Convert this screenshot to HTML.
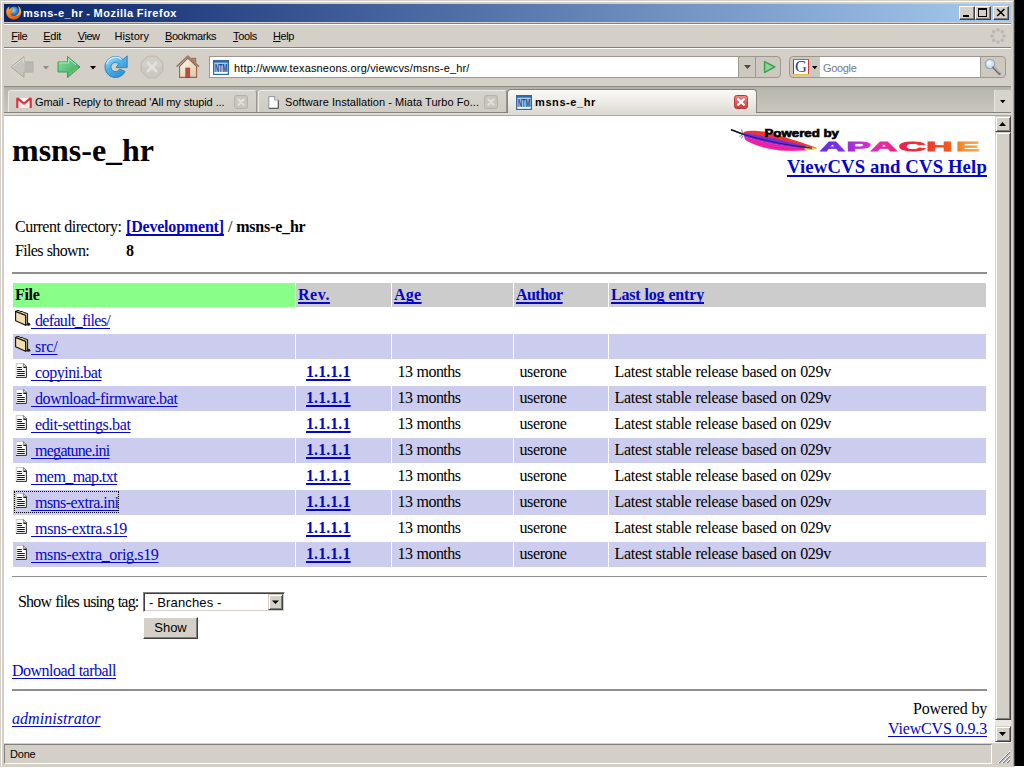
<!DOCTYPE html>
<html><head><meta charset="utf-8"><title>msns-e_hr - Mozilla Firefox</title>
<style>
html,body{margin:0;padding:0;}
body{width:1024px;height:768px;overflow:hidden;background:#fff;position:relative;font-family:"Liberation Sans","DejaVu Sans",sans-serif;font-size:11px;color:#000;}
.abs{position:absolute;}
svg{display:block;overflow:visible;}
#win{position:absolute;left:0;top:0;width:1015px;height:767px;background:#d4d0c8;}
#black{position:absolute;left:1015px;top:0;width:9px;height:766px;background:#000;}
#titlebar{position:absolute;left:4px;top:4px;width:1007px;height:18px;background:linear-gradient(to right,#0a246a 0%,#a6caf0 100%);}
#title{position:absolute;left:20px;top:2px;color:#fff;font-weight:bold;font-size:11px;line-height:14px;white-space:nowrap;letter-spacing:0.45px;}
.ui{font-family:"Liberation Sans","DejaVu Sans",sans-serif;font-size:11px;white-space:nowrap;line-height:14px;position:absolute;}
.hl{position:absolute;height:1px;}
.vl{position:absolute;width:1px;}
.cbtn{position:absolute;top:6px;width:16px;height:14px;background:#d4d0c8;box-sizing:border-box;border:1px solid;border-color:#fff #404040 #404040 #fff;box-shadow:inset -1px -1px 0 #808080;}
#page{position:absolute;left:4px;top:116px;width:991px;height:626px;background:#fff;overflow:hidden;font-family:"Liberation Serif","DejaVu Serif",serif;font-size:16px;color:#000;}
#page a{color:#0606c8;text-decoration:underline;text-decoration-skip-ink:none;text-underline-offset:2px;text-decoration-thickness:1px;}
#page a b{text-decoration:underline;text-decoration-thickness:2px;text-underline-offset:1.5px;}
#page .t{position:absolute;white-space:nowrap;line-height:20px;height:20px;}
#page .bg{position:absolute;}
#page .hr{position:absolute;left:8px;width:975px;}
</style></head>
<body>
<div id="win"></div><div id="black"></div>
<div class="hl" style="left:1px;top:1px;width:1012px;background:#fff"></div>
<div class="vl" style="left:1px;top:1px;height:765px;background:#fff"></div>
<div class="vl" style="left:1013px;top:1px;height:765px;background:#aaa7a0"></div>
<div class="vl" style="left:1014px;top:0px;height:766px;background:#3a3a3a"></div>
<div id="titlebar"></div>
<svg class="abs" style="left:5px;top:5px" width="17" height="15" viewBox="0 0 17 15">
<defs><radialGradient id="ffg" cx="0.45" cy="0.35" r="0.6"><stop offset="0" stop-color="#8fd0ff"/><stop offset="0.6" stop-color="#2a78c8"/><stop offset="1" stop-color="#143c8c"/></radialGradient>
<linearGradient id="ffo" x1="0" y1="0" x2="1" y2="1"><stop offset="0" stop-color="#ffb020"/><stop offset="0.5" stop-color="#f07818"/><stop offset="1" stop-color="#d84a10"/></linearGradient></defs>
<circle cx="9" cy="7" r="5.6" fill="url(#ffg)"/>
<path d="M1.2 5.5 C0.6 9.5 3.2 14.2 8.6 14.4 C13.6 14.5 16.6 10.6 16.2 6.4 C15.9 3.6 14.6 1.8 12.8 1 C14.2 2.8 14.6 5 14 7 C13.2 10 10.6 11.4 8.2 11 C6.2 10.6 5.4 9.4 5.6 8.2 C6.6 8.8 7.8 8.4 8.4 7.6 C7 7.8 6 7 6.2 5.6 C6.4 4.4 7.4 4 8 3.2 C6.4 3 5 3.6 4.2 4.6 C4 3.4 4.2 2.4 4.8 1.4 C3 2 1.6 3.4 1.2 5.5 Z" fill="url(#ffo)"/>
<path d="M12.8 1 C14.2 2.8 14.6 5 14 7 C13.4 9.4 11.6 10.8 9.6 11.1 C12.8 11.6 15.6 9.6 16.2 6.4 C15.9 3.6 14.6 1.8 12.8 1Z" fill="#f8c830" opacity="0.75"/>
</svg>
<div class="ui" style="left:23px;top:6px;letter-spacing:0.508px;word-spacing:-0.508px;font-weight:bold;color:#fff;">msns-e_hr - Mozilla Firefox</div>
<div class="cbtn" style="left:959px"><svg width="14" height="12"><rect x="3" y="8" width="6" height="2" fill="#000"/></svg></div>
<div class="cbtn" style="left:975px"><svg width="14" height="12"><rect x="2.5" y="1.5" width="8" height="8" fill="none" stroke="#000"/><rect x="2" y="1" width="9" height="2" fill="#000"/></svg></div>
<div class="cbtn" style="left:993px"><svg width="14" height="12"><path d="M3.2 2L10.4 9M10.4 2L3.2 9" stroke="#000" stroke-width="1.5"/></svg></div>
<div class="hl" style="left:4px;top:23px;width:1007px;background:#808080"></div>
<div class="hl" style="left:4px;top:24px;width:1007px;background:#fff"></div>
<div class="ui" style="left:11.3px;top:29px;letter-spacing:-0.463px;word-spacing:0.463px;"><u>F</u>ile</div>
<div class="ui" style="left:43.3px;top:29px;letter-spacing:-0.317px;word-spacing:0.317px;"><u>E</u>dit</div>
<div class="ui" style="left:77.8px;top:29px;letter-spacing:-0.489px;word-spacing:0.489px;"><u>V</u>iew</div>
<div class="ui" style="left:114.6px;top:29px;letter-spacing:0.024px;word-spacing:-0.024px;">Hi<u>s</u>tory</div>
<div class="ui" style="left:165px;top:29px;letter-spacing:-0.448px;word-spacing:0.448px;"><u>B</u>ookmarks</div>
<div class="ui" style="left:233px;top:29px;letter-spacing:-0.338px;word-spacing:0.338px;"><u>T</u>ools</div>
<div class="ui" style="left:273px;top:29px;letter-spacing:-0.41px;word-spacing:0.41px;"><u>H</u>elp</div>
<svg class="abs" style="left:990px;top:28px" width="16" height="16" viewBox="0 0 16 16"><circle cx="14.00" cy="8.00" r="1.75" fill="#b9b6af"/><circle cx="12.24" cy="12.24" r="1.75" fill="#b9b6af"/><circle cx="8.00" cy="14.00" r="1.75" fill="#b9b6af"/><circle cx="3.76" cy="12.24" r="1.75" fill="#b9b6af"/><circle cx="2.00" cy="8.00" r="1.75" fill="#b9b6af"/><circle cx="3.76" cy="3.76" r="1.75" fill="#b9b6af"/><circle cx="8.00" cy="2.00" r="1.75" fill="#b9b6af"/><circle cx="12.24" cy="3.76" r="1.75" fill="#b9b6af"/></svg>
<div class="hl" style="left:4px;top:47px;width:1007px;background:#808080"></div>
<div class="hl" style="left:4px;top:48px;width:1007px;background:#fff"></div>
<svg class="abs" style="left:8px;top:54px" width="28" height="26" viewBox="0 0 28 26">
<circle cx="13.5" cy="13" r="12.5" fill="#d8d5ce" opacity="0.55"/>
<path d="M3 13 L16 2.5 V8 H25 V18 H16 V23.5 Z" fill="#c6c3bc" stroke="#aaa7a0" stroke-width="1" stroke-linejoin="round"/>
<path d="M16.5 8.8 H24.2 V17.2 H16.5 Z" fill="#bab7b0"/>
<path d="M4.6 13 L15.4 4.4 V8.8 H17" fill="none" stroke="#dddad4" stroke-width="1"/>
</svg>
<svg class="abs" style="left:43px;top:66px" width="6" height="3.5" viewBox="0 0 6 3.5"><path d="M0 0H6L3.0 3.5Z" fill="#8f8c86"/></svg>
<svg class="abs" style="left:56px;top:54px" width="28" height="26" viewBox="0 0 28 26">
<defs><linearGradient id="fwg" x1="0" y1="0" x2="1" y2="1"><stop offset="0" stop-color="#8fe0a8"/><stop offset="0.5" stop-color="#5cc47c"/><stop offset="1" stop-color="#2f9a52"/></linearGradient></defs>
<path d="M2 8 H11.5 V2.5 L24 13 L11.5 23.5 V18 H2 Z" fill="url(#fwg)" stroke="#3b9c58" stroke-width="1" stroke-linejoin="round"/>
<path d="M3 9 H12.5 V4.8 L20 11" fill="none" stroke="#b6f0c6" stroke-width="1" opacity="0.9"/>
<path d="M13 20.5 L21.5 13.6" stroke="#8fcf4a" stroke-width="1.5" opacity="0.6"/>
</svg>
<svg class="abs" style="left:90px;top:66px" width="6" height="3.5" viewBox="0 0 6 3.5"><path d="M0 0H6L3.0 3.5Z" fill="#000"/></svg>
<svg class="abs" style="left:103px;top:54px" width="26" height="26" viewBox="0 0 26 26">
<defs><linearGradient id="rlg" x1="0.1" y1="0" x2="0.7" y2="1"><stop offset="0" stop-color="#b4e6fb"/><stop offset="0.45" stop-color="#52b2e8"/><stop offset="1" stop-color="#2c8ed2"/></linearGradient></defs>
<path d="M22.1 17.5 A10.6 10.6 0 1 1 20 5.5 L24.2 1.8 L24.2 13.6 L13 13.6 L15.75 9.75 A4.6 4.6 0 1 0 16.67 14.94 Z" fill="url(#rlg)" stroke="#2b7fbd" stroke-width="0.9" stroke-linejoin="round"/>
<path d="M3.6 10 A9.4 9.4 0 0 1 18.6 5.4" fill="none" stroke="#d8f4ff" stroke-width="1.3" opacity="0.85"/>
</svg>
<svg class="abs" style="left:140px;top:55px" width="24" height="24" viewBox="0 0 24 24">
<path d="M7.6 1.2 H16.4 L22.8 7.6 V16.4 L16.4 22.8 H7.6 L1.2 16.4 V7.6 Z" fill="#cbc8c1" stroke="#bab7b0" stroke-width="1"/>
<path d="M8 2.2 H16 L21.8 8 V12 H2.2 V8 Z" fill="#d3d0c9" opacity="0.8"/>
<path d="M8 8 L16 16 M16 8 L8 16" stroke="#e2e0db" stroke-width="3" stroke-linecap="round"/>
</svg>
<svg class="abs" style="left:176px;top:55px" width="24" height="24" viewBox="0 0 24 24">
<defs><linearGradient id="hmw" x1="0" y1="0" x2="1" y2="1"><stop offset="0" stop-color="#fff8ea"/><stop offset="1" stop-color="#dcc8a6"/></linearGradient></defs>
<rect x="15.8" y="3.2" width="4" height="7" fill="#bf8a6c" stroke="#9a6044" stroke-width="0.8"/>
<path d="M3.6 11.4 L11.8 3 L20.6 11.4 V22.4 H3.6 Z" fill="url(#hmw)" stroke="#9c6248" stroke-width="1.1"/>
<path d="M1.2 11.2 L11.8 1.2 L22.4 11.2" fill="none" stroke="#94826e" stroke-width="1.8" stroke-linejoin="round" stroke-linecap="round"/>
<rect x="9.8" y="13" width="4" height="9.4" fill="#b8503a" stroke="#8c3a26" stroke-width="0.6"/>
</svg>
<div class="abs" style="left:209px;top:56px;width:530px;height:22px;background:#fff;box-sizing:border-box;border:1px solid #9b988f;border-right:0"></div>
<svg class="abs" style="left:213px;top:60px" width="16" height="15" viewBox="0 0 16 15">
<rect x="0" y="0" width="16" height="15" fill="#3068a6"/>
<rect x="1.3" y="2.6" width="13.4" height="11.1" fill="#a9cbee"/>
<rect x="1.3" y="11.8" width="13.4" height="1.9" fill="#f4f9fe"/>
<text x="1.9" y="11.5" font-family="Liberation Sans, sans-serif" font-weight="bold" font-size="10.4" fill="#1b4888" textLength="12.4" lengthAdjust="spacingAndGlyphs">NTM</text>
</svg>
<div class="ui" style="left:234px;top:61px;letter-spacing:0.156px;word-spacing:-0.156px;">http://www.texasneons.org/viewcvs/msns-e_hr/</div>
<div class="abs" style="left:738px;top:56px;width:18px;height:22px;background:#cdc9c1;box-sizing:border-box;border:1px solid #9b988f"></div>
<svg class="abs" style="left:744px;top:65px" width="7" height="4" viewBox="0 0 7 4"><path d="M0 0H7L3.5 4Z" fill="#4c4a46"/></svg>
<div class="abs" style="left:755px;top:56px;width:26px;height:22px;background:#cdc9c1;box-sizing:border-box;border:1px solid #9b988f;border-radius:0 4px 4px 0"></div>
<svg class="abs" style="left:763px;top:60px" width="14" height="14" viewBox="0 0 14 14">
<path d="M1.6 1.6 L11.8 7 L1.6 12.4 Z" fill="#8fd49a" stroke="#3f9e50" stroke-width="1.5" stroke-linejoin="round"/>
</svg>
<div class="abs" style="left:789px;top:56px;width:32px;height:22px;background:#cdc9c1;box-sizing:border-box;border:1px solid #9b988f;border-radius:4px 0 0 4px"></div>
<svg class="abs" style="left:793px;top:59px" width="16" height="16" viewBox="0 0 16 16">
<rect x="0" y="0" width="16" height="16" fill="#fff"/>
<path d="M0.5 16 V0.5" stroke="#2a50b8" stroke-width="1"/><path d="M0 0.5 H16" stroke="#38a048" stroke-width="1"/><path d="M15.5 0 V16" stroke="#d83830" stroke-width="1"/><path d="M0 15.5 H16" stroke="#e8c040" stroke-width="1"/>
<text x="8" y="13.2" text-anchor="middle" font-family="Liberation Serif, serif" font-size="16.5" fill="#1c3c98">G</text>
</svg>
<svg class="abs" style="left:812px;top:66px" width="5.5" height="3.2" viewBox="0 0 5.5 3.2"><path d="M0 0H5.5L2.75 3.2Z" fill="#000"/></svg>
<div class="abs" style="left:820px;top:56px;width:161px;height:22px;background:#fff;box-sizing:border-box;border:1px solid #9b988f;border-left:0;border-right:0"></div>
<div class="ui" style="left:823px;top:61px;letter-spacing:-0.331px;word-spacing:0.331px;color:#7a7a7a;">Google</div>
<div class="abs" style="left:980px;top:56px;width:26px;height:22px;background:#cdc9c1;box-sizing:border-box;border:1px solid #9b988f;border-radius:0 4px 4px 0"></div>
<svg class="abs" style="left:983px;top:58px" width="20" height="18" viewBox="0 0 20 18">
<circle cx="7" cy="6" r="4.6" fill="#cfe4f4" stroke="#9aa8b4" stroke-width="1.3"/>
<circle cx="6" cy="5" r="2" fill="#f2f9ff" opacity="0.9"/>
<path d="M10.4 9.4 L16.6 15.8" stroke="#6a6a6a" stroke-width="2.4" stroke-linecap="round"/>
<path d="M10.8 9 L16.6 15" stroke="#e8e8e8" stroke-width="0.8" stroke-linecap="round"/>
</svg>
<div class="abs" style="left:4px;top:86px;width:1007px;height:26px;background:linear-gradient(#8d8b85 0,#8d8b85 1px,#b1aea6 1px,#bab7af 4px,#c9c6be 100%)"></div>
<div class="hl" style="left:4px;top:112px;width:1007px;background:#85837c"></div>
<div class="abs" style="left:4px;top:113px;width:1007px;height:3px;background:#dedbd4"></div>
<div class="abs" style="left:8px;top:90px;width:249px;height:22px;background:linear-gradient(#d6d3cc,#cfccc4);border:1px solid;border-color:#ebe9e4 #97948c #cfccc4 #ebe9e4;border-bottom:0;box-sizing:border-box;border-radius:3px 3px 0 0;"></div>
<div class="abs" style="left:258px;top:90px;width:249px;height:22px;background:linear-gradient(#d6d3cc,#cfccc4);border:1px solid;border-color:#ebe9e4 #97948c #cfccc4 #ebe9e4;border-bottom:0;box-sizing:border-box;border-radius:3px 3px 0 0;"></div>
<div class="abs" style="left:507px;top:89px;width:250px;height:24px;background:linear-gradient(#fbfaf8,#ebe9e4 60%,#dedbd4);border:1px solid #85837c;border-bottom:0;box-sizing:border-box;border-radius:4px 4px 0 0"></div>
<svg class="abs" style="left:16px;top:96.6px" width="16" height="12" viewBox="0 0 16 12">
<rect x="0.6" y="0.8" width="14.8" height="10.2" fill="#fff6f4" stroke="#eec0c0" stroke-width="0.6"/>
<path d="M1.3 11 V1.2 L8 6.6 L14.7 1.2 V11" fill="none" stroke="#d6343f" stroke-width="2.2" stroke-linejoin="bevel"/>
<path d="M3 10.8 L7 6.6 M13 10.8 L9 6.6" stroke="#f0c4c4" stroke-width="0.8"/>
</svg>
<div class="ui" style="left:35px;top:95px;letter-spacing:-0.098px;word-spacing:0.098px;">Gmail - Reply to thread 'All my stupid ...</div>
<svg class="abs" style="left:234px;top:95px" width="14" height="14" viewBox="0 0 14 14">
<rect x="0.5" y="0.5" width="13" height="13" rx="2.2" fill="#c8c5be" stroke="#b5b2ab" stroke-width="1"/>
<path d="M4.4 4.4 L9.6 9.6 M9.6 4.4 L4.4 9.6" stroke="#e2e0da" stroke-width="2.2" stroke-linecap="round"/>
</svg>
<svg class="abs" style="left:268px;top:96px" width="11" height="13" viewBox="0 0 11 13">
<path d="M0.8 0.6 H6.6 L10.2 4 V12.2 H0.8 Z" fill="#fdfdff" stroke="#8a8a90" stroke-width="0.9"/>
<path d="M6.6 0.6 V4 H10.2" fill="#e4e8f0" stroke="#8a8a90" stroke-width="0.8"/>
<path d="M0.8 12.4 H10.4 M10.4 4.4 V12.4" stroke="#55555a" stroke-width="1"/>
</svg>
<div class="ui" style="left:285px;top:95px;letter-spacing:0.056px;word-spacing:-0.056px;">Software Installation - Miata Turbo Fo...</div>
<svg class="abs" style="left:484px;top:95px" width="14" height="14" viewBox="0 0 14 14">
<rect x="0.5" y="0.5" width="13" height="13" rx="2.2" fill="#c8c5be" stroke="#b5b2ab" stroke-width="1"/>
<path d="M4.4 4.4 L9.6 9.6 M9.6 4.4 L4.4 9.6" stroke="#e2e0da" stroke-width="2.2" stroke-linecap="round"/>
</svg>
<svg class="abs" style="left:516px;top:94.5px" width="16" height="15" viewBox="0 0 16 15">
<rect x="0" y="0" width="16" height="15" fill="#3068a6"/>
<rect x="1.3" y="2.6" width="13.4" height="11.1" fill="#a9cbee"/>
<rect x="1.3" y="11.8" width="13.4" height="1.9" fill="#f4f9fe"/>
<text x="1.9" y="11.5" font-family="Liberation Sans, sans-serif" font-weight="bold" font-size="10.4" fill="#1b4888" textLength="12.4" lengthAdjust="spacingAndGlyphs">NTM</text>
</svg>
<div class="ui" style="left:535px;top:95px;letter-spacing:0.595px;word-spacing:-0.595px;font-weight:bold;">msns-e_hr</div>
<svg class="abs" style="left:734px;top:95px" width="14" height="14" viewBox="0 0 14 14">
<defs><linearGradient id="tcg" x1="0" y1="0" x2="0" y2="1"><stop offset="0" stop-color="#f08a8a"/><stop offset="1" stop-color="#d03838"/></linearGradient></defs>
<rect x="0.5" y="0.5" width="13" height="13" rx="2.2" fill="url(#tcg)" stroke="#b83a3a" stroke-width="1"/>
<path d="M4.2 4.2 L9.8 9.8 M9.8 4.2 L4.2 9.8" stroke="#fff" stroke-width="2.3" stroke-linecap="round"/>
</svg>
<div class="hl" style="left:4px;top:115px;width:1007px;background:#a9a69f"></div>
<div class="abs" style="left:994px;top:90px;width:17px;height:22px;background:#d6d3cc;border-left:1px solid #e8e6e1;box-sizing:border-box"></div>
<svg class="abs" style="left:1000px;top:100px" width="5.5" height="3.2" viewBox="0 0 5.5 3.2"><path d="M0 0H5.5L2.75 3.2Z" fill="#000"/></svg>
<div class="abs" style="left:995px;top:116px;width:16px;height:626px;background:#eae8e4"></div>
<div class="abs" style="left:995px;top:116px;width:16px;height:16px;box-sizing:border-box;background:#d4d0c8;border:1px solid;border-color:#d4d0c8 #404040 #404040 #d4d0c8;box-shadow:inset 1px 1px 0 #fff, inset -1px -1px 0 #808080;"></div>
<svg class="abs" style="left:999px;top:122px" width="7" height="4" viewBox="0 0 7 4"><path d="M0 4H7L3.5 0Z" fill="#000"/></svg>
<div class="abs" style="left:995px;top:132px;width:16px;height:588px;box-sizing:border-box;background:#d4d0c8;border:1px solid;border-color:#d4d0c8 #404040 #404040 #d4d0c8;box-shadow:inset 1px 1px 0 #fff, inset -1px -1px 0 #808080;"></div>
<div class="abs" style="left:995px;top:726px;width:16px;height:16px;box-sizing:border-box;background:#d4d0c8;border:1px solid;border-color:#d4d0c8 #404040 #404040 #d4d0c8;box-shadow:inset 1px 1px 0 #fff, inset -1px -1px 0 #808080;"></div>
<svg class="abs" style="left:999px;top:732px" width="7" height="4" viewBox="0 0 7 4"><path d="M0 0H7L3.5 4Z" fill="#000"/></svg>
<div class="hl" style="left:4px;top:742px;width:1007px;background:#fff"></div>
<div class="abs" style="left:4px;top:744px;width:988px;height:20px;box-sizing:border-box;border:1px solid;border-color:#808080 #fff #fff #808080"></div>
<div class="ui" style="left:10px;top:747px;letter-spacing:-0.199px;word-spacing:0.199px;">Done</div>
<svg class="abs" style="left:998px;top:751px" width="13" height="13"><path d="M12 1L1 12M12 5L5 12M12 9L9 12" stroke="#808080" stroke-width="1.4"/><path d="M12 0L0 12M12 4L4 12M12 8L8 12" stroke="#fff" stroke-width="1"/></svg>
<div id="page">
<div class="t" style="left:8px;top:14px;font-size:32px;font-weight:bold;line-height:40px;height:40px;letter-spacing:-0.024px;word-spacing:0.024px">msns-e_hr</div>
<svg class="abs" style="left:722px;top:6px" width="262" height="36" viewBox="726 122 262 36">
<defs><linearGradient id="apg" gradientUnits="userSpaceOnUse" x1="820" x2="978" y1="0" y2="0"><stop offset="0" stop-color="#6030e0"/><stop offset="0.16" stop-color="#8a30e0"/><stop offset="0.27" stop-color="#cc30cc"/><stop offset="0.42" stop-color="#e82a98"/><stop offset="0.56" stop-color="#e82038"/><stop offset="0.72" stop-color="#f04420"/><stop offset="0.84" stop-color="#f06020"/><stop offset="0.9" stop-color="#f09030"/><stop offset="1" stop-color="#f0a848"/></linearGradient></defs>
<path d="M743.5 132 C748 130.2 756 130.2 766 132 C782 135.4 800 142.4 817.5 148 L806 147 C790 143 770 137 743.5 133.4 Z" fill="#f03434"/>
<path d="M743.5 133 C770 136.4 790 142.4 808 146.6 L817.5 148.2 L806 149 C786 147 764 143 744 136.6 Z" fill="#7a2cd8"/>
<path d="M744 136.4 C764 142.6 786 146.6 806 148.6 L817.5 148.4 C808 150.6 796 151 784 150.4 C768 149.4 752 145 745 139.6 Z" fill="#ea20a8"/>
<path d="M746 140 C754 145.4 770 149.6 786 150.4 C796 151 806 150.6 814 149.4 L800 151.2 C780 152 758 148 746 140 Z" fill="#f03c50"/>
<path d="M806 146.2 L817.8 148.2 L806 150.4 C804 149 804 147.4 806 146.2 Z" fill="#f2d428"/>
<path d="M731 129.6 L744 134.6 C766 141 790 146 812 148.2" fill="none" stroke="#22208c" stroke-width="1.3"/>
<path d="M731 129.6 L743.5 134.4" fill="none" stroke="#111" stroke-width="1.2"/>
<path d="M741.5 129.5 L742.5 133 M739.5 136.5 L742.5 135 M741 138.5 L743 136" stroke="#8a98b0" stroke-width="1.2"/>
<text x="764.5" y="136.6" font-family="Liberation Sans, sans-serif" font-weight="bold" font-size="10.2" fill="#000" stroke="#000" stroke-width="0.6" textLength="74.5" lengthAdjust="spacingAndGlyphs">Powered by</text>
<g font-family="Liberation Sans, sans-serif" font-weight="bold" font-size="13.3" fill="url(#apg)" stroke="url(#apg)" stroke-width="0.8"><text x="820" y="151.1" textLength="24.8" lengthAdjust="spacingAndGlyphs">A</text><text x="846.6" y="151.1" textLength="24.2" lengthAdjust="spacingAndGlyphs">P</text><text x="870.9" y="151.1" textLength="26.4" lengthAdjust="spacingAndGlyphs">A</text><text x="898.8" y="151.1" textLength="26.8" lengthAdjust="spacingAndGlyphs">C</text><text x="926.4" y="151.1" textLength="26.4" lengthAdjust="spacingAndGlyphs">H</text><text x="956.2" y="151.1" textLength="23.2" lengthAdjust="spacingAndGlyphs">E</text></g>
</svg>
<div class="t" style="left:783px;top:39px;font-size:18.72px;line-height:24px;height:24px;letter-spacing:0.16px;word-spacing:-0.16px"><a><b>ViewCVS and CVS Help</b></a></div>
<div class="t" style="left:11px;top:101px;letter-spacing:-0.505px;word-spacing:0.505px;">Current directory:</div>
<div class="t" style="left:122px;top:101px;letter-spacing:-0.195px;word-spacing:0.195px;"><a><b>[Development]</b></a> / <b>msns-e_hr</b></div>
<div class="t" style="left:11px;top:125px;letter-spacing:-0.668px;word-spacing:0.668px;">Files shown:</div>
<div class="t" style="left:122px;top:125px;"><b>8</b></div>
<div class="hr" style="top:156px;height:2px;background:#8e8e8e"></div>
<div class="bg" style="left:9px;top:167px;width:282px;height:24px;background:#88ff88"></div>
<div class="bg" style="left:292px;top:167px;width:95px;height:24px;background:#cccccc"></div>
<div class="bg" style="left:388px;top:167px;width:121px;height:24px;background:#cccccc"></div>
<div class="bg" style="left:510px;top:167px;width:94px;height:24px;background:#cccccc"></div>
<div class="bg" style="left:605px;top:167px;width:377px;height:24px;background:#cccccc"></div>
<div class="t" style="left:11px;top:169px;letter-spacing:-0.316px;word-spacing:0.316px;"><b>File</b></div>
<div class="t" style="left:294px;top:169px;letter-spacing:0.555px;word-spacing:-0.555px;"><a><b>Rev.</b></a></div>
<div class="t" style="left:390px;top:169px;letter-spacing:0.281px;word-spacing:-0.281px;"><a><b>Age</b></a></div>
<div class="t" style="left:512px;top:169px;letter-spacing:-0.547px;word-spacing:0.547px;"><a><b>Author</b></a></div>
<div class="t" style="left:607px;top:169px;letter-spacing:-0.176px;word-spacing:0.176px;"><a><b>Last log entry</b></a></div>
<div class="abs" style="left:11px;top:194px;width:16px;height:16px"><svg width="16" height="16" viewBox="0 0 16 16"><ellipse cx="13.4" cy="14.2" rx="1.9" ry="1.5" fill="#1c1c1c"/><path d="M2.4 0.5 L4.2 0.5 L5.2 1.6 L7.4 1.4 L8.6 2.4 L12.6 3.6 V14.4 L10.6 15.2 V5.4 L0.6 1.4 Z" fill="#cfc7aa" stroke="#141008" stroke-width="1" stroke-linejoin="round"/><path d="M0.6 1.4 L10.6 5.6 V15.2 L0.6 10.8 Z" fill="#f4ddb0" stroke="#141008" stroke-width="1.1" stroke-linejoin="round"/></svg></div>
<div class="t" style="left:27px;top:195px;letter-spacing:-0.673px;word-spacing:0.673px;"><a>&nbsp;default_files/</a></div>
<div class="bg" style="left:9px;top:218px;width:282px;height:25px;background:#ccccee"></div>
<div class="bg" style="left:292px;top:218px;width:95px;height:25px;background:#ccccee"></div>
<div class="bg" style="left:388px;top:218px;width:121px;height:25px;background:#ccccee"></div>
<div class="bg" style="left:510px;top:218px;width:94px;height:25px;background:#ccccee"></div>
<div class="bg" style="left:605px;top:218px;width:377px;height:25px;background:#ccccee"></div>
<div class="abs" style="left:11px;top:220px;width:16px;height:16px"><svg width="16" height="16" viewBox="0 0 16 16"><ellipse cx="13.4" cy="14.2" rx="1.9" ry="1.5" fill="#1c1c1c"/><path d="M2.4 0.5 L4.2 0.5 L5.2 1.6 L7.4 1.4 L8.6 2.4 L12.6 3.6 V14.4 L10.6 15.2 V5.4 L0.6 1.4 Z" fill="#cfc7aa" stroke="#141008" stroke-width="1" stroke-linejoin="round"/><path d="M0.6 1.4 L10.6 5.6 V15.2 L0.6 10.8 Z" fill="#f4ddb0" stroke="#141008" stroke-width="1.1" stroke-linejoin="round"/></svg></div>
<div class="t" style="left:27px;top:221px;letter-spacing:-0.152px;word-spacing:0.152px;"><a>&nbsp;src/</a></div>
<div class="abs" style="left:11px;top:246px;width:16px;height:16px"><svg width="16" height="16" viewBox="0 0 16 16"><path d="M1 1.4 H8.4 L11.5 4.5 V15.4 H1 Z" fill="#fff"/><path d="M1.2 15.4 V1.5 H8.4" fill="none" stroke="#c4c4c4" stroke-width="0.9"/><path d="M8.4 1.5 L11.4 4.6 H8.4 Z" fill="#f0f0f0" stroke="#555" stroke-width="0.7"/><path d="M11.4 4.6 V15.4 H1" fill="none" stroke="#2a2a2a" stroke-width="1"/><path d="M2.2 5.5 H6.8 M8.4 5.5 H11 M2.2 7.5 H7 M2.2 9.5 H9.8 M2.2 11.5 H9.8 M2.2 13.5 H9.8" stroke="#1a1a1a" stroke-width="1"/></svg></div>
<div class="t" style="left:27px;top:247px;letter-spacing:-0.459px;word-spacing:0.459px;"><a>&nbsp;copyini.bat</a></div>
<div class="t" style="left:302px;top:246px;letter-spacing:0.071px;word-spacing:-0.071px;"><a><b>1.1.1.1</b></a></div>
<div class="t" style="left:393.5px;top:246px;letter-spacing:-0.516px;word-spacing:0.516px;">13 months</div>
<div class="t" style="left:515.5px;top:246px;letter-spacing:-0.395px;word-spacing:0.395px;">userone</div>
<div class="t" style="left:610.5px;top:246px;letter-spacing:-0.292px;word-spacing:0.292px;">Latest stable release based on 029v</div>
<div class="bg" style="left:9px;top:270px;width:282px;height:25px;background:#ccccee"></div>
<div class="bg" style="left:292px;top:270px;width:95px;height:25px;background:#ccccee"></div>
<div class="bg" style="left:388px;top:270px;width:121px;height:25px;background:#ccccee"></div>
<div class="bg" style="left:510px;top:270px;width:94px;height:25px;background:#ccccee"></div>
<div class="bg" style="left:605px;top:270px;width:377px;height:25px;background:#ccccee"></div>
<div class="abs" style="left:11px;top:272px;width:16px;height:16px"><svg width="16" height="16" viewBox="0 0 16 16"><path d="M1 1.4 H8.4 L11.5 4.5 V15.4 H1 Z" fill="#fff"/><path d="M1.2 15.4 V1.5 H8.4" fill="none" stroke="#c4c4c4" stroke-width="0.9"/><path d="M8.4 1.5 L11.4 4.6 H8.4 Z" fill="#f0f0f0" stroke="#555" stroke-width="0.7"/><path d="M11.4 4.6 V15.4 H1" fill="none" stroke="#2a2a2a" stroke-width="1"/><path d="M2.2 5.5 H6.8 M8.4 5.5 H11 M2.2 7.5 H7 M2.2 9.5 H9.8 M2.2 11.5 H9.8 M2.2 13.5 H9.8" stroke="#1a1a1a" stroke-width="1"/></svg></div>
<div class="t" style="left:27px;top:273px;letter-spacing:-0.386px;word-spacing:0.386px;"><a>&nbsp;download-firmware.bat</a></div>
<div class="t" style="left:302px;top:272px;letter-spacing:0.071px;word-spacing:-0.071px;"><a><b>1.1.1.1</b></a></div>
<div class="t" style="left:393.5px;top:272px;letter-spacing:-0.516px;word-spacing:0.516px;">13 months</div>
<div class="t" style="left:515.5px;top:272px;letter-spacing:-0.395px;word-spacing:0.395px;">userone</div>
<div class="t" style="left:610.5px;top:272px;letter-spacing:-0.292px;word-spacing:0.292px;">Latest stable release based on 029v</div>
<div class="abs" style="left:11px;top:298px;width:16px;height:16px"><svg width="16" height="16" viewBox="0 0 16 16"><path d="M1 1.4 H8.4 L11.5 4.5 V15.4 H1 Z" fill="#fff"/><path d="M1.2 15.4 V1.5 H8.4" fill="none" stroke="#c4c4c4" stroke-width="0.9"/><path d="M8.4 1.5 L11.4 4.6 H8.4 Z" fill="#f0f0f0" stroke="#555" stroke-width="0.7"/><path d="M11.4 4.6 V15.4 H1" fill="none" stroke="#2a2a2a" stroke-width="1"/><path d="M2.2 5.5 H6.8 M8.4 5.5 H11 M2.2 7.5 H7 M2.2 9.5 H9.8 M2.2 11.5 H9.8 M2.2 13.5 H9.8" stroke="#1a1a1a" stroke-width="1"/></svg></div>
<div class="t" style="left:27px;top:299px;letter-spacing:-0.369px;word-spacing:0.369px;"><a>&nbsp;edit-settings.bat</a></div>
<div class="t" style="left:302px;top:298px;letter-spacing:0.071px;word-spacing:-0.071px;"><a><b>1.1.1.1</b></a></div>
<div class="t" style="left:393.5px;top:298px;letter-spacing:-0.516px;word-spacing:0.516px;">13 months</div>
<div class="t" style="left:515.5px;top:298px;letter-spacing:-0.395px;word-spacing:0.395px;">userone</div>
<div class="t" style="left:610.5px;top:298px;letter-spacing:-0.292px;word-spacing:0.292px;">Latest stable release based on 029v</div>
<div class="bg" style="left:9px;top:322px;width:282px;height:25px;background:#ccccee"></div>
<div class="bg" style="left:292px;top:322px;width:95px;height:25px;background:#ccccee"></div>
<div class="bg" style="left:388px;top:322px;width:121px;height:25px;background:#ccccee"></div>
<div class="bg" style="left:510px;top:322px;width:94px;height:25px;background:#ccccee"></div>
<div class="bg" style="left:605px;top:322px;width:377px;height:25px;background:#ccccee"></div>
<div class="abs" style="left:11px;top:324px;width:16px;height:16px"><svg width="16" height="16" viewBox="0 0 16 16"><path d="M1 1.4 H8.4 L11.5 4.5 V15.4 H1 Z" fill="#fff"/><path d="M1.2 15.4 V1.5 H8.4" fill="none" stroke="#c4c4c4" stroke-width="0.9"/><path d="M8.4 1.5 L11.4 4.6 H8.4 Z" fill="#f0f0f0" stroke="#555" stroke-width="0.7"/><path d="M11.4 4.6 V15.4 H1" fill="none" stroke="#2a2a2a" stroke-width="1"/><path d="M2.2 5.5 H6.8 M8.4 5.5 H11 M2.2 7.5 H7 M2.2 9.5 H9.8 M2.2 11.5 H9.8 M2.2 13.5 H9.8" stroke="#1a1a1a" stroke-width="1"/></svg></div>
<div class="t" style="left:27px;top:325px;letter-spacing:-0.716px;word-spacing:0.716px;"><a>&nbsp;megatune.ini</a></div>
<div class="t" style="left:302px;top:324px;letter-spacing:0.071px;word-spacing:-0.071px;"><a><b>1.1.1.1</b></a></div>
<div class="t" style="left:393.5px;top:324px;letter-spacing:-0.516px;word-spacing:0.516px;">13 months</div>
<div class="t" style="left:515.5px;top:324px;letter-spacing:-0.395px;word-spacing:0.395px;">userone</div>
<div class="t" style="left:610.5px;top:324px;letter-spacing:-0.292px;word-spacing:0.292px;">Latest stable release based on 029v</div>
<div class="abs" style="left:11px;top:350px;width:16px;height:16px"><svg width="16" height="16" viewBox="0 0 16 16"><path d="M1 1.4 H8.4 L11.5 4.5 V15.4 H1 Z" fill="#fff"/><path d="M1.2 15.4 V1.5 H8.4" fill="none" stroke="#c4c4c4" stroke-width="0.9"/><path d="M8.4 1.5 L11.4 4.6 H8.4 Z" fill="#f0f0f0" stroke="#555" stroke-width="0.7"/><path d="M11.4 4.6 V15.4 H1" fill="none" stroke="#2a2a2a" stroke-width="1"/><path d="M2.2 5.5 H6.8 M8.4 5.5 H11 M2.2 7.5 H7 M2.2 9.5 H9.8 M2.2 11.5 H9.8 M2.2 13.5 H9.8" stroke="#1a1a1a" stroke-width="1"/></svg></div>
<div class="t" style="left:27px;top:351px;letter-spacing:-0.585px;word-spacing:0.585px;"><a>&nbsp;mem_map.txt</a></div>
<div class="t" style="left:302px;top:350px;letter-spacing:0.071px;word-spacing:-0.071px;"><a><b>1.1.1.1</b></a></div>
<div class="t" style="left:393.5px;top:350px;letter-spacing:-0.516px;word-spacing:0.516px;">13 months</div>
<div class="t" style="left:515.5px;top:350px;letter-spacing:-0.395px;word-spacing:0.395px;">userone</div>
<div class="t" style="left:610.5px;top:350px;letter-spacing:-0.292px;word-spacing:0.292px;">Latest stable release based on 029v</div>
<div class="bg" style="left:9px;top:374px;width:282px;height:25px;background:#ccccee"></div>
<div class="bg" style="left:292px;top:374px;width:95px;height:25px;background:#ccccee"></div>
<div class="bg" style="left:388px;top:374px;width:121px;height:25px;background:#ccccee"></div>
<div class="bg" style="left:510px;top:374px;width:94px;height:25px;background:#ccccee"></div>
<div class="bg" style="left:605px;top:374px;width:377px;height:25px;background:#ccccee"></div>
<div class="abs" style="left:11px;top:376px;width:16px;height:16px"><svg width="16" height="16" viewBox="0 0 16 16"><path d="M1 1.4 H8.4 L11.5 4.5 V15.4 H1 Z" fill="#fff"/><path d="M1.2 15.4 V1.5 H8.4" fill="none" stroke="#c4c4c4" stroke-width="0.9"/><path d="M8.4 1.5 L11.4 4.6 H8.4 Z" fill="#f0f0f0" stroke="#555" stroke-width="0.7"/><path d="M11.4 4.6 V15.4 H1" fill="none" stroke="#2a2a2a" stroke-width="1"/><path d="M2.2 5.5 H6.8 M8.4 5.5 H11 M2.2 7.5 H7 M2.2 9.5 H9.8 M2.2 11.5 H9.8 M2.2 13.5 H9.8" stroke="#1a1a1a" stroke-width="1"/></svg></div>
<div class="t" style="left:27px;top:377px;letter-spacing:-0.542px;word-spacing:0.542px;"><a>&nbsp;msns-extra.ini</a></div>
<div class="abs" style="left:10px;top:375px;width:105px;height:22px;border:1px dotted #000;box-sizing:border-box"></div>
<div class="t" style="left:302px;top:376px;letter-spacing:0.071px;word-spacing:-0.071px;"><a><b>1.1.1.1</b></a></div>
<div class="t" style="left:393.5px;top:376px;letter-spacing:-0.516px;word-spacing:0.516px;">13 months</div>
<div class="t" style="left:515.5px;top:376px;letter-spacing:-0.395px;word-spacing:0.395px;">userone</div>
<div class="t" style="left:610.5px;top:376px;letter-spacing:-0.292px;word-spacing:0.292px;">Latest stable release based on 029v</div>
<div class="abs" style="left:11px;top:402px;width:16px;height:16px"><svg width="16" height="16" viewBox="0 0 16 16"><path d="M1 1.4 H8.4 L11.5 4.5 V15.4 H1 Z" fill="#fff"/><path d="M1.2 15.4 V1.5 H8.4" fill="none" stroke="#c4c4c4" stroke-width="0.9"/><path d="M8.4 1.5 L11.4 4.6 H8.4 Z" fill="#f0f0f0" stroke="#555" stroke-width="0.7"/><path d="M11.4 4.6 V15.4 H1" fill="none" stroke="#2a2a2a" stroke-width="1"/><path d="M2.2 5.5 H6.8 M8.4 5.5 H11 M2.2 7.5 H7 M2.2 9.5 H9.8 M2.2 11.5 H9.8 M2.2 13.5 H9.8" stroke="#1a1a1a" stroke-width="1"/></svg></div>
<div class="t" style="left:27px;top:403px;letter-spacing:-0.317px;word-spacing:0.317px;"><a>&nbsp;msns-extra.s19</a></div>
<div class="t" style="left:302px;top:402px;letter-spacing:0.071px;word-spacing:-0.071px;"><a><b>1.1.1.1</b></a></div>
<div class="t" style="left:393.5px;top:402px;letter-spacing:-0.516px;word-spacing:0.516px;">13 months</div>
<div class="t" style="left:515.5px;top:402px;letter-spacing:-0.395px;word-spacing:0.395px;">userone</div>
<div class="t" style="left:610.5px;top:402px;letter-spacing:-0.292px;word-spacing:0.292px;">Latest stable release based on 029v</div>
<div class="bg" style="left:9px;top:426px;width:282px;height:25px;background:#ccccee"></div>
<div class="bg" style="left:292px;top:426px;width:95px;height:25px;background:#ccccee"></div>
<div class="bg" style="left:388px;top:426px;width:121px;height:25px;background:#ccccee"></div>
<div class="bg" style="left:510px;top:426px;width:94px;height:25px;background:#ccccee"></div>
<div class="bg" style="left:605px;top:426px;width:377px;height:25px;background:#ccccee"></div>
<div class="abs" style="left:11px;top:428px;width:16px;height:16px"><svg width="16" height="16" viewBox="0 0 16 16"><path d="M1 1.4 H8.4 L11.5 4.5 V15.4 H1 Z" fill="#fff"/><path d="M1.2 15.4 V1.5 H8.4" fill="none" stroke="#c4c4c4" stroke-width="0.9"/><path d="M8.4 1.5 L11.4 4.6 H8.4 Z" fill="#f0f0f0" stroke="#555" stroke-width="0.7"/><path d="M11.4 4.6 V15.4 H1" fill="none" stroke="#2a2a2a" stroke-width="1"/><path d="M2.2 5.5 H6.8 M8.4 5.5 H11 M2.2 7.5 H7 M2.2 9.5 H9.8 M2.2 11.5 H9.8 M2.2 13.5 H9.8" stroke="#1a1a1a" stroke-width="1"/></svg></div>
<div class="t" style="left:27px;top:429px;letter-spacing:-0.353px;word-spacing:0.353px;"><a>&nbsp;msns-extra_orig.s19</a></div>
<div class="t" style="left:302px;top:428px;letter-spacing:0.071px;word-spacing:-0.071px;"><a><b>1.1.1.1</b></a></div>
<div class="t" style="left:393.5px;top:428px;letter-spacing:-0.516px;word-spacing:0.516px;">13 months</div>
<div class="t" style="left:515.5px;top:428px;letter-spacing:-0.395px;word-spacing:0.395px;">userone</div>
<div class="t" style="left:610.5px;top:428px;letter-spacing:-0.292px;word-spacing:0.292px;">Latest stable release based on 029v</div>
<div class="hr" style="top:460px;height:1px;background:#8e8e8e"></div>
<div class="t" style="left:14px;top:476px;letter-spacing:-0.787px;word-spacing:0.787px;">Show files using tag:</div>
<div class="abs" style="left:139px;top:476px;width:142px;height:20px;box-sizing:border-box;background:#fff;border:1px solid;border-color:#808080 #fff #fff #808080;box-shadow:inset 1px 1px 0 #404040, inset -1px -1px 0 #d4d0c8;"></div>
<div class="abs" style="left:145px;top:479px;font:13px/16px 'Liberation Sans',sans-serif;white-space:nowrap;letter-spacing:0.15px">- Branches -</div>
<div class="abs" style="left:264px;top:478px;width:15px;height:16px;box-sizing:border-box;background:#d4d0c8;border:1px solid;border-color:#d4d0c8 #404040 #404040 #d4d0c8;box-shadow:inset 1px 1px 0 #fff, inset -1px -1px 0 #808080;"><svg width="13" height="14" viewBox="0 0 13 14"><path d="M3 5.5h7l-3.5 3.5z" fill="#000"/></svg></div>
<div class="abs" style="left:139px;top:501px;width:55px;height:22px;box-sizing:border-box;background:#d4d0c8;border:1px solid;border-color:#fff #404040 #404040 #fff;box-shadow:inset -1px -1px 0 #808080;font:13px/20px 'Liberation Sans',sans-serif;text-align:center">Show</div>
<div class="t" style="left:8px;top:545px;letter-spacing:-0.502px;word-spacing:0.502px;"><a>Download tarball</a></div>
<div class="hr" style="top:573px;height:2px;background:#8e8e8e"></div>
<div class="t" style="left:8px;top:593px;letter-spacing:0.037px;word-spacing:-0.037px;"><a><i>administrator</i></a></div>
<div class="t" style="left:909px;top:583px;letter-spacing:-0.22px;word-spacing:0.22px;">Powered by</div>
<div class="t" style="left:884px;top:603px;letter-spacing:-0.152px;word-spacing:0.152px;"><a>ViewCVS 0.9.3</a></div>
</div>
</body></html>
